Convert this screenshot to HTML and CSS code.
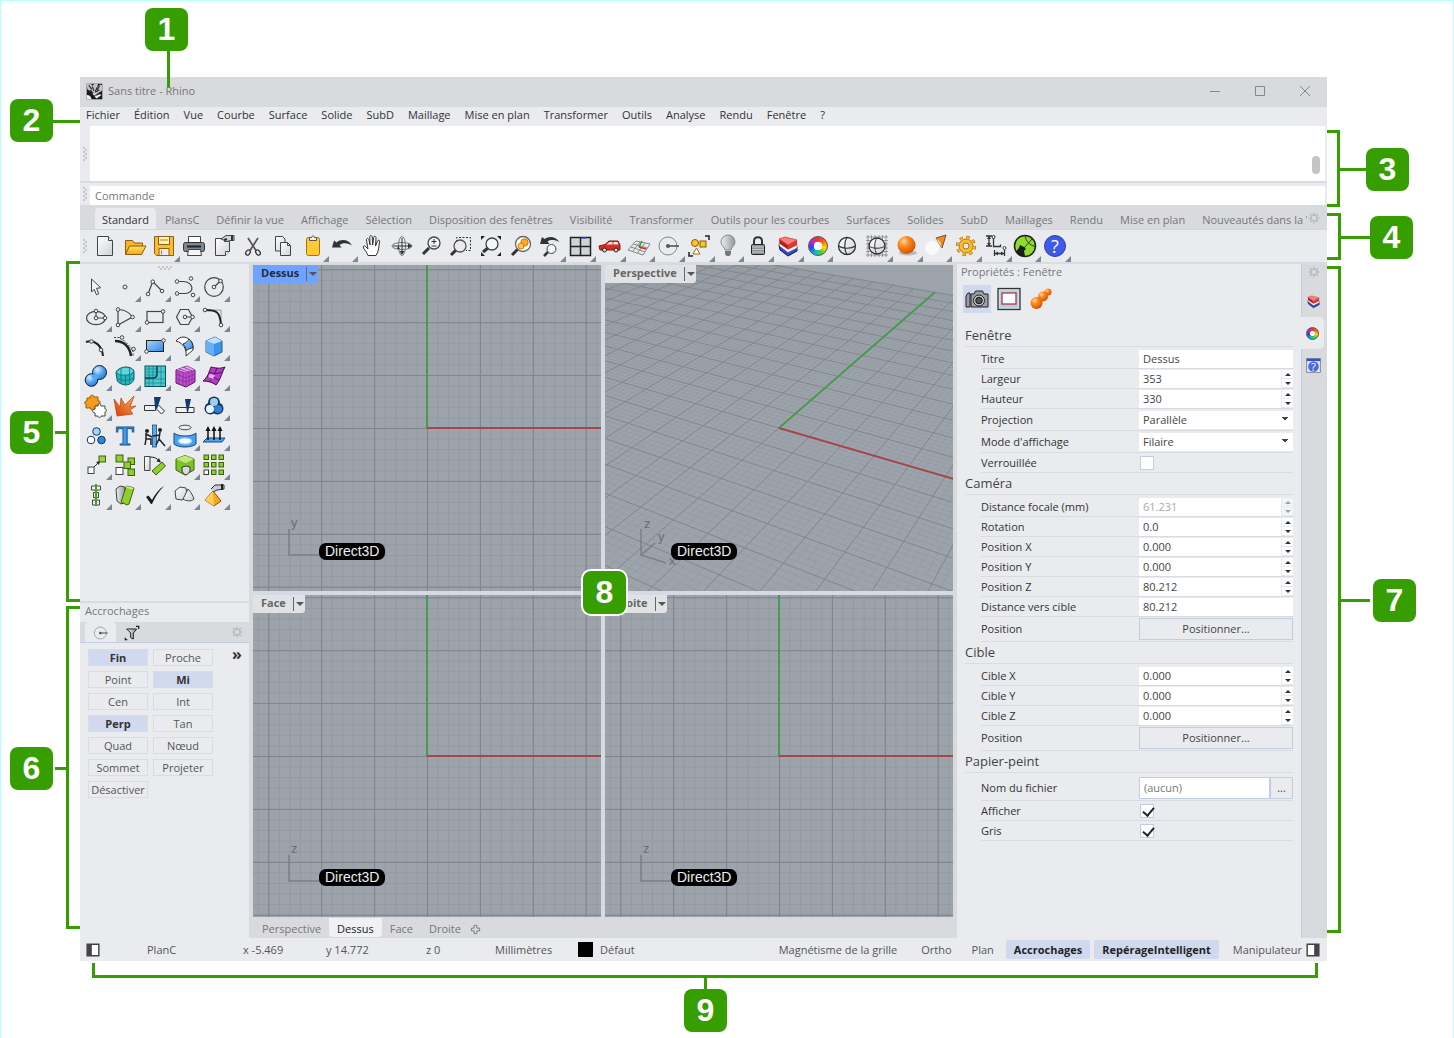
FILE: index.html
```
<!DOCTYPE html>
<html lang="fr">
<head>
	<meta charset="utf-8">
	<meta name="viewport" content="width=device-width, initial-scale=1">
	<title>Sans titre - Rhino</title>
	<link rel="stylesheet" href="styles.css">
</head>
<body>
<svg class="sprite" aria-hidden="true">
	<defs>
		<linearGradient id="gBlue" x1="0" y1="0" x2="1" y2="1"><stop offset="0" stop-color="#a8d4ff"/><stop offset="1" stop-color="#2f86e0"/></linearGradient>
		<radialGradient id="gBall" cx=".35" cy=".3" r=".8"><stop offset="0" stop-color="#d4ecff"/><stop offset=".5" stop-color="#55a5f5"/><stop offset="1" stop-color="#1f6fd0"/></radialGradient>
		<radialGradient id="gOrange" cx=".35" cy=".3" r=".8"><stop offset="0" stop-color="#ffd9a8"/><stop offset=".35" stop-color="#ff8a1c"/><stop offset="1" stop-color="#c84a00"/></radialGradient>
		<linearGradient id="gPaper" x1="0" y1="0" x2="1" y2="1"><stop offset="0" stop-color="#fff"/><stop offset="1" stop-color="#cfd2d6"/></linearGradient>
		<linearGradient id="gGrey" x1="0" y1="0" x2="1" y2="0"><stop offset="0" stop-color="#eef0f2"/><stop offset="1" stop-color="#8f969d"/></linearGradient>
		<linearGradient id="gFire" x1="0" y1="1" x2="1" y2="0"><stop offset="0" stop-color="#d63a08"/><stop offset="1" stop-color="#ffb45a"/></linearGradient>
		<linearGradient id="gGold" x1="0" y1="0" x2="0" y2="1"><stop offset="0" stop-color="#ffdf5e"/><stop offset="1" stop-color="#f5a81c"/></linearGradient>
		<pattern id="minor" width="10.58" height="10.58" patternUnits="userSpaceOnUse"><path d="M0 0H10.58M0 0V10.58" stroke="#8b9299" stroke-width="1" fill="none"/></pattern>
		<pattern id="major" width="52.9" height="52.9" patternUnits="userSpaceOnUse"><path d="M0 0H52.9M0 0V52.9" stroke="#7f8389" stroke-width="2" fill="none"/></pattern>
	</defs>

	<!-- main toolbar -->
	<symbol id="new" viewBox="0 0 24 24"><path d="M4.500 2.500h11l4 4v15h-15z" fill="url(#gPaper)" stroke="#444"/><path d="M15.500 2.500v4h4" fill="#fff" stroke="#444"/></symbol>
	<symbol id="open" viewBox="0 0 24 24"><path d="M2.500 20V6.500h7l2 2.500h8v4" fill="#f9b524" stroke="#8a5c10"/><path d="M2.500 20.500L6.500 12h16.500l-4.500 8.500z" fill="url(#gGold)" stroke="#8a5c10"/></symbol>
	<symbol id="save" viewBox="0 0 24 24"><path d="M2.500 2.500h19v19h-17l-2-2z" fill="#fbbd2b" stroke="#8a6112"/><path d="M6.500 3v7.500h11V3" fill="#fff2c0" stroke="#8a6112"/><path d="M7 21v-6.500h10V21" fill="#e9ebee" stroke="#8a6112"/><path d="M9.500 16.500v4M8 6h8" stroke="#b5841d"/></symbol>
	<symbol id="print" viewBox="0 0 24 24"><path d="M6.500 9V2.500h12V9" fill="#fff" stroke="#444"/><rect x="1.500" y="8.500" width="21" height="9" rx="2" fill="#7c8792" stroke="#333"/><path d="M5 12.500h14" stroke="#222" stroke-width="2"/><path d="M6.500 15.500h12l1 6h-14z" fill="#f4f5f6" stroke="#444"/></symbol>
	<symbol id="export" viewBox="0 0 24 24"><path d="M3.500 4.500h9v3h5v10l-4 4h-10z" fill="url(#gPaper)" stroke="#444"/><path d="M13.500 21.500v-4h4" fill="#fff" stroke="#444"/><path d="M9 5l5-3.500h8v5h-4l-3 1z" fill="#d0d3d7" stroke="#444"/><path d="M20 1.500v5M12 6l3-1" stroke="#333" stroke-width="2"/></symbol>
	<symbol id="cut" viewBox="0 0 24 24"><path d="M7 4l8 12.500M17 4L9 16.500" stroke="#555" stroke-width="1.700" fill="none"/><ellipse cx="7" cy="18.500" rx="2" ry="2.800" transform="rotate(35 7 18.500)" fill="none" stroke="#333" stroke-width="1.300"/><ellipse cx="17" cy="18.500" rx="2" ry="2.800" transform="rotate(-35 17 18.500)" fill="none" stroke="#333" stroke-width="1.300"/></symbol>
	<symbol id="copy" viewBox="0 0 24 24"><path d="M4.500 2.500h7l2.500 2.500v12h-9.500z" fill="url(#gPaper)" stroke="#444"/><path d="M9.500 8.500h7l3 3v10h-10z" fill="url(#gPaper)" stroke="#444"/><path d="M16.500 8.500v3h3" fill="none" stroke="#444"/></symbol>
	<symbol id="paste" viewBox="0 0 24 24"><rect x="5.500" y="3.500" width="13" height="18" rx="2" fill="#ffc933" stroke="#a8720f"/><path d="M8.500 6.500v-3h2c0-2 3-2 3 0h2v3z" fill="#eee" stroke="#555"/></symbol>
	<symbol id="undo" viewBox="0 0 24 24"><path d="M2 13.500L4 6.500l2.500 2c5-4 12-3 15.500 3-5-3-9-3-12.500-.5l2 2.500z" fill="#333"/></symbol>
	<symbol id="hand" viewBox="0 0 24 24"><path d="M8 21.500c-1-3-3-5-4.500-7.500-1-2 1-3 2.500-1L8 15 6.500 6c0-2 2-2 2.500 0l1 5-.2-8c0-2 2.200-2 2.400 0l.5 8 1-7.500c.2-2 2.400-1.500 2.300.3L15.500 12 17.500 7c.8-1.500 2.500-1 2.100.8-1 5.200-.6 9.200-3.600 13.700z" fill="#fff" stroke="#333"/></symbol>
	<symbol id="orbit" viewBox="0 0 24 24"><ellipse cx="12" cy="12" rx="10" ry="3.500" fill="none" stroke="#777"/><ellipse cx="12" cy="12" rx="3.500" ry="9.500" fill="none" stroke="#777"/><path d="M12 4v15M3 12h18" fill="none" stroke="#333"/><path d="M12 21l-2.500-4h5zM22 12l-4-2.500v5zM7 15l1-3 2 3z" fill="#333"/></symbol>
	<symbol id="zoom" viewBox="0 0 24 24"><path d="M3 20l6-6" stroke="#333" stroke-width="3"/><circle cx="14" cy="9" r="6" fill="#f3f5f7" stroke="#444" stroke-width="1.300"/><path d="M11.500 7.500h5M14 5v5M11.500 12h5" stroke="#333"/></symbol>
	<symbol id="zoomwin" viewBox="0 0 24 24"><path d="M7.500 8V3.500h14v13H17" fill="none" stroke="#333" stroke-dasharray="2 1.500"/><path d="M2 21l5-5" stroke="#333" stroke-width="3"/><circle cx="11" cy="12" r="6" fill="none" stroke="#555" stroke-width="1.300"/></symbol>
	<symbol id="zoomext" viewBox="0 0 24 24"><path d="M4 18l5-4" stroke="#333" stroke-width="3"/><circle cx="13" cy="10" r="6" fill="#f3f5f7" stroke="#444" stroke-width="1.300"/><path d="M2 6V2h4zM18 2h4v4zM22 18v4h-4zM2 18v4h4z" fill="#222"/></symbol>
	<symbol id="zoomsel" viewBox="0 0 24 24"><path d="M3 21l6-6" stroke="#333" stroke-width="3"/><circle cx="14" cy="10" r="7.500" fill="#fff" stroke="#666" stroke-width="1.300"/><circle cx="15.500" cy="8.500" r="3.700" fill="#ffa82e" stroke="#d27c00"/><circle cx="12" cy="12" r="3" fill="#ffc64a" stroke="#d27c00"/></symbol>
	<symbol id="undoview" viewBox="0 0 24 24"><path d="M2 10l2-7 2.500 2c5-3.500 11-2.500 15 3-5-2.500-9-2.500-12-.5l2 2.500z" fill="#333"/><path d="M6 22l4-4" stroke="#333" stroke-width="2.500"/><circle cx="13.500" cy="15" r="4.500" fill="#f3f5f7" stroke="#444"/></symbol>
	<symbol id="four" viewBox="0 0 24 24"><rect x="2.500" y="3.500" width="20" height="18" fill="#cfd3d8" stroke="#222" stroke-width="1.500"/><path d="M12.500 3v19M2 12.500h21" stroke="#222" stroke-width="1.500"/><path d="M14 4h4" stroke="#2c52d8" stroke-width="1.500"/></symbol>
	<symbol id="car" viewBox="0 0 24 24"><path d="M1 12l6-1.500L11 7h9l2 4v5H2z" fill="#e02a20" stroke="#8c1410"/><path d="M8.500 10.500L11.500 8h3v2.500zM15.500 8h4l.8 2.500h-4.800z" fill="#e8edf2"/><circle cx="6.500" cy="16" r="2" fill="#ddd" stroke="#222"/><circle cx="18" cy="16" r="2" fill="#ddd" stroke="#222"/></symbol>
	<symbol id="cplane" viewBox="0 0 24 24"><path d="M1 16L9 7l14 3-7 11zM4 13l14 5M6.500 10l14 4M5.500 17.500L13 8M10.500 19l7.500-10" fill="none" stroke="#888"/><path d="M12 13l3-6" stroke="#2aa52a" stroke-width="1.500"/><path d="M12 13l7 2" stroke="#d22" stroke-width="1.500"/></symbol>
	<symbol id="osnap" viewBox="0 0 24 24"><circle cx="11" cy="12" r="9" fill="none" stroke="#888"/><path d="M11 12h11" stroke="#333" stroke-width="1.300"/><circle cx="11" cy="12" r="2" fill="#555"/></symbol>
	<symbol id="select" viewBox="0 0 24 24"><circle cx="8" cy="9" r="3.500" fill="#ffc22e" stroke="#8a5a00"/><rect x="13" y="7" width="6" height="6" fill="#ffc22e" stroke="#8a5a00"/><path d="M9.500 14l3.500 6H6z" fill="#fff" stroke="#b06a00"/><path d="M18 2h4v4M6 22H2v-4" fill="none" stroke="#222" stroke-width="1.500"/></symbol>
	<symbol id="bulb" viewBox="0 0 24 24"><path d="M9 16c0-3-4-4-4-8a7 7 0 0 1 14 0c0 4-4 5-4 8z" fill="url(#gGrey)" stroke="#888"/><path d="M9 17h6v3l-1.500 2h-3L9 20z" fill="#777"/></symbol>
	<symbol id="lock" viewBox="0 0 24 24"><path d="M8 11V7c0-5 8-5 8 0v4" fill="none" stroke="#333" stroke-width="2"/><rect x="5.500" y="10.500" width="13" height="10" rx="1" fill="#8e9296" stroke="#222"/><path d="M6 13h12M6 15.500h12M6 18h12" stroke="#c4c7ca"/></symbol>
	<symbol id="layer" viewBox="0 0 24 24"><path d="M3 11l9 6 9-4v4l-9 5-8-6z" fill="#2d46d4" stroke="#223"/><path d="M3 9l9 6 9-4v3l-9 4.500L3.500 12z" fill="#fff" stroke="#667" stroke-width=".6"/><path d="M3 5l9 6v4.500L3.500 9.500z" fill="#b81d1d"/><path d="M12 11l9-5v5l-9 4.500z" fill="#e0342c"/><path d="M3 5l6-2 12 3-9 5z" fill="#ff7f78" stroke="#b22" stroke-width=".6"/></symbol>
	<symbol id="globe" viewBox="0 0 24 24"><circle cx="12" cy="12" r="8.500" fill="url(#gPaper)" stroke="#333" stroke-width="1.300"/><path d="M3.500 12c4 3 13 3 17 0M12 3.500c-3 4-3 13 0 17" fill="none" stroke="#333" stroke-width="1.200"/></symbol>
	<symbol id="globegrid" viewBox="0 0 24 24"><path d="M1 3h22M1 6.500h22M1 10h22M1 14h22M1 17.500h22M1 21h22M3 1v22M6.500 1v22M10 1v22M14 1v22M17.500 1v22M21 1v22" stroke="#777"  stroke-width=".7"/><circle cx="12" cy="12" r="8" fill="url(#gPaper)" stroke="#333" stroke-width="1.300"/><path d="M4 12c4 3 12 3 16 0M12 4c-3 4-3 12 0 16" fill="none" stroke="#333"/></symbol>
	<symbol id="ball" viewBox="0 0 24 24"><ellipse cx="13" cy="19" rx="9" ry="2.500" fill="#bbb"/><circle cx="11.500" cy="11" r="9" fill="url(#gOrange)"/></symbol>
	<symbol id="spot" viewBox="0 0 24 24"><circle cx="8" cy="14" r="7" fill="#fff" opacity=".7"/><path d="M12 4l10-3-4 13z" fill="#f08a2a" stroke="#8a4a10"/><path d="M12 4l6 10-2-6z" fill="#fff3c0"/></symbol>
	<symbol id="gear" viewBox="0 0 24 24"><circle cx="12" cy="12" r="8.200" fill="none" stroke="#b5780f" stroke-width="4" stroke-dasharray="3.200 3.240"/><circle cx="12" cy="12" r="7" fill="#fbbb30" stroke="#b5780f"/><circle cx="12" cy="12" r="8.200" fill="none" stroke="#fbbb30" stroke-width="2.500" stroke-dasharray="2 4.440" stroke-dashoffset="-.6"/><circle cx="12" cy="12" r="3" fill="#e9ebef" stroke="#b5780f"/></symbol>
	<symbol id="cog" viewBox="0 0 24 24"><circle cx="12" cy="12" r="6" fill="none" stroke="currentColor" stroke-width="3"/><path d="M12 1v5M12 18v5M1 12h5M18 12h5M4.200 4.200l3.500 3.500M16.300 16.300l3.500 3.500M4.200 19.800l3.500-3.500M16.300 7.700l3.500-3.500" stroke="currentColor" stroke-width="3"/></symbol>
	<symbol id="dim" viewBox="0 0 24 24"><path d="M2 2h6M2 12h6M5 2v10M9.500 3v9.500h7v-2M10.500 16v6M20.500 16v6M10.500 19.500h10" fill="none" stroke="#333" stroke-width="1.300"/><circle cx="9.500" cy="3" r="1.500" fill="#fff" stroke="#333"/><circle cx="20.500" cy="14" r="1.500" fill="#fff" stroke="#333"/><path d="M5 2l-2 3h4zM5 12l-2-3h4zM11 19.500l3-2v4zM20 19.500l-3-2v4z" fill="#333"/></symbol>
	<symbol id="gh" viewBox="0 0 24 24"><circle cx="12" cy="12" r="10.500" fill="#8fdc2c" stroke="#222" stroke-width="1.500"/><path d="M12 1.500c1 6 4 9 10 11M11 14l8-9" fill="none" stroke="#333"/><path d="M3 17c2-1 3-3 4-6l2 1 2 1 2 2-2 2 1 5c-4 1-7-1-9-5z" fill="#1c1c1c"/></symbol>

	<!-- tool palette -->
	<symbol id="arrow" viewBox="0 0 24 24"><path d="M7.500 4v13l2.700-2.700 2.300 5.500 2.300-1-2.300-5.500 4.200-.5z" fill="#f4f5f7" stroke="#444"/></symbol>
	<symbol id="point" viewBox="0 0 24 24"><circle cx="12" cy="12" r="2" class="n"/></symbol>
	<symbol id="pline" viewBox="0 0 24 24"><path d="M5 19L9.700 6.700 19 16" class="l"/><circle cx="5" cy="19" r="1.800" class="n"/><circle cx="9.700" cy="6.700" r="1.800" class="n"/><circle cx="19" cy="16" r="1.800" class="n"/></symbol>
	<symbol id="curve" viewBox="0 0 24 24"><path d="M4 6.500h6c11 0 12 12 2 12H4" class="l"/><circle cx="4" cy="6.500" r="1.800" class="n"/><circle cx="4" cy="18.500" r="1.800" class="n"/><circle cx="18" cy="3.500" r="1.800" class="n"/><circle cx="20" cy="20" r="1.800" class="n"/></symbol>
	<symbol id="circle" viewBox="0 0 24 24"><circle cx="12" cy="12" r="9.300" class="l"/><path d="M12 12l6.500-6" class="l"/><circle cx="12" cy="12" r="1.800" class="n"/><circle cx="18.500" cy="6" r="1.800" class="n"/></symbol>
	<symbol id="ellipse" viewBox="0 0 24 24"><ellipse cx="12" cy="13" rx="9.500" ry="6.700" class="l"/><path d="M12 6v7h9" class="l"/><circle cx="12" cy="6" r="1.800" class="n"/><circle cx="12" cy="13" r="1.800" class="n"/><circle cx="21" cy="13" r="1.800" class="n"/></symbol>
	<symbol id="arc" viewBox="0 0 24 24"><path d="M5 4.500V20l14.500-8C16 7 11 4.500 5 4.500" class="l"/><circle cx="5" cy="4.500" r="1.800" class="n"/><circle cx="5" cy="20" r="1.800" class="n"/><circle cx="19.500" cy="12" r="1.800" class="n"/></symbol>
	<symbol id="rect" viewBox="0 0 24 24"><rect x="4" y="6.500" width="16" height="11" class="l"/><circle cx="4" cy="17.500" r="1.800" class="n"/><circle cx="20" cy="6.500" r="1.800" class="n"/></symbol>
	<symbol id="hex" viewBox="0 0 24 24"><path d="M3.500 12l4-7.500h8l4 7.500-4 7.500h-8zM12 12h7" class="l"/><circle cx="12" cy="12" r="1.800" class="n"/><circle cx="19.500" cy="12" r="1.800" class="n"/></symbol>
	<symbol id="fillet" viewBox="0 0 24 24"><path d="M3 5h16v15" stroke="#999" fill="none"/><path d="M3 5c12 0 15 2 16 15" stroke="#222" stroke-width="2" fill="none"/><circle cx="3" cy="5" r="1.800" class="n"/><circle cx="19" cy="20" r="1.800" class="n"/></symbol>
	<symbol id="extend" viewBox="0 0 24 24"><path d="M2 8c9-3 16 4 17 14" stroke="#222" stroke-width="2" fill="none"/><circle cx="7.500" cy="7.500" r="1.800" class="n"/><circle cx="17" cy="16" r="1.800" class="n"/></symbol>
	<symbol id="blend" viewBox="0 0 24 24"><path d="M2 7c9 0 15 6 16 15" stroke="#222" stroke-width="2.500" fill="none"/><path d="M1 3.500h7l12 12V23" fill="none" stroke="#333" stroke-dasharray="2 1.500"/><circle cx="9" cy="3.500" r="1.800" class="n"/><circle cx="20.500" cy="15" r="1.800" class="n"/></symbol>
	<symbol id="plane" viewBox="0 0 24 24"><rect x="3.500" y="6.500" width="17" height="11" fill="url(#gBlue)" stroke="#222"/><circle cx="3.500" cy="17.500" r="1.800" class="n"/><circle cx="20.500" cy="6.500" r="1.800" class="n"/></symbol>
	<symbol id="loft" viewBox="0 0 24 24"><path d="M3 7c2-3 5-4 8-4 6 1 10 6 9 13l-7 6c1-7-3-13-10-15z" fill="#fff" stroke="#333"/><path d="M10 10c3-1 5-3 6-5 3 2 4 6 4 9-2 0-5 1-7 3 0-3-1-5-3-7z" fill="url(#gBlue)" stroke="#234"/></symbol>
	<symbol id="box" viewBox="0 0 24 24"><path d="M4 7l9-4 7 4v11l-8 4-8-4z" fill="#3c93ec" stroke="#245a92"/><path d="M4 7l9-4 7 4-8 3z" fill="#bfe0ff"/><path d="M4 7l8 3v12l-8-4z" fill="#68b0f5"/></symbol>
	<symbol id="union" viewBox="0 0 24 24"><circle cx="15.500" cy="8.500" r="7" fill="url(#gBall)" stroke="#123"/><circle cx="7.500" cy="16" r="6.300" fill="url(#gBall)" stroke="#123"/><path d="M9 10.500l4.500 4.500" stroke="#55a5f5" stroke-width="5"/></symbol>
	<symbol id="subd" viewBox="0 0 24 24"><path d="M3 9c0-3 5-6 10-6 4 0 8 2 8 5v7c-1 4-5 6-9 6-5-1-8-3-8-6z" fill="#27b5bd" stroke="#0b5b63"/><path d="M4 9c1-3 5-5 9-5 4 0 7 1 7 4-2 2-5 3-8 3s-6-1-8-2z" fill="#5fd6da"/><path d="M3.500 9c3 3 12 3 17.500-.5M12.500 11v10M4 14c3 3 12 3 17 0M8 4.500v15M16.500 4v15" stroke="#0b7580" stroke-width=".8" fill="none"/></symbol>
	<symbol id="mesh" viewBox="0 0 24 24"><rect x="2" y="2" width="20.500" height="20.500" fill="#4ec6cf" stroke="#0b4f58"/><path d="M2 8h20M2 15h20M2 19h20M6 2v20M10 2v20M18 2v20M2 5h12M2 11h12" stroke="#178a95" stroke-width=".8"/><path d="M2 14h8c3 0 4-1 4-4V2" stroke="#04434b" stroke-width="1.500" fill="none"/></symbol>
	<symbol id="meshbox" viewBox="0 0 24 24"><path d="M3 6l11-4 8 4v12l-9 5-10-4z" fill="#c050cf" stroke="#5a1466"/><path d="M3 6l11-4 8 4-9 3z" fill="#e6a4ee"/><path d="M3 6l10 3 9-3M13 9v14M3 10l10 4 9-4M3 15l10 3 9-4M6 7v13M10 8v14M16 8v13M19 7v12M6 5l10 3M10 3l9 4" stroke="#8a2c98" stroke-width=".8" fill="none"/></symbol>
	<symbol id="patch" viewBox="0 0 24 24"><path d="M1 17C6 13 7 8 9 3c4 1 9 2 14 0-3 5-4 12-9 18-4-3-8-4-13-4z" fill="#b23cc4" stroke="#3f0b49"/><path d="M5 13c4-1 8 1 12 3M7 8c5 2 9 2 13 0M7 18c4-5 6-9 8-14" stroke="#3f0b49" stroke-width=".8" fill="none"/><path d="M8 10l5 1-2 4-5-2z" fill="#e7a6ef"/></symbol>
	<symbol id="puzzle" viewBox="0 0 24 24"><path d="M3 4h3c-1-3 4-4 4-1h4v4c3-1 3 4 0 3v4h-4c1 3-4 3-3 0H2v-4c-2 0-2-3 1-3z" fill="#f49c1c" stroke="#a05c05"/><path d="M11 12h3c0-3 3-3 3 0h4v3c2 0 2 3 0 3v4h-4c0 2-3 2-3 0h-3v-3c-3 0-3-4 0-4z" fill="#fff" stroke="#444"/></symbol>
	<symbol id="explode" viewBox="0 0 24 24"><path d="M4 22L1 5l6 8 1-9 4 7 9-9-4 11 6-1-6 4 3 4z" fill="url(#gFire)" stroke="#b5400a" stroke-width=".7"/></symbol>
	<symbol id="trim" viewBox="0 0 24 24"><path d="M1.500 11.500h11v5h-11zM12.500 14l3-3 6 6-3 3z" fill="#f1f2f4" stroke="#333"/><path d="M11 3h7l-4 12-2-1z" fill="#123a73"/></symbol>
	<symbol id="split" viewBox="0 0 24 24"><path d="M3 13.500h18v5H3z" fill="#f1f2f4" stroke="#333"/><path d="M12 5h6l-3 13h-1z" fill="#123a73"/></symbol>
	<symbol id="bool" viewBox="0 0 24 24"><g fill="#16365e"><circle cx="12" cy="8.500" r="6"/><circle cx="8.500" cy="14.500" r="6"/><circle cx="15.500" cy="14.500" r="6"/></g><circle cx="12" cy="8" r="4" fill="#9bd0f7"/><circle cx="8" cy="15" r="4" fill="#e8f4ff"/><circle cx="16" cy="15" r="4" fill="#2b7fd8"/></symbol>
	<symbol id="group" viewBox="0 0 24 24"><circle cx="12.500" cy="7.500" r="3.800" fill="#a5d3f5" stroke="#16365e"/><circle cx="7" cy="16" r="3.800" fill="#fff" stroke="#16365e"/><circle cx="17.500" cy="16" r="3.800" fill="#2b86dd" stroke="#16365e"/></symbol>
	<symbol id="hist" viewBox="0 0 24 24"><rect x="9.500" y="1" width="4" height="22" fill="#57aef2" stroke="#1a4f84" stroke-width=".8"/><circle cx="4" cy="7" r="2" fill="#222"/><circle cx="17" cy="6" r="2" fill="#222"/><path d="M3 9v6l-1 6M3 10l6 3M17 8l-1 7 6 7M3 15h5v6M17 11l-7 1M16 15l-3 6" stroke="#222" stroke-width="1.500" fill="none"/></symbol>
	<symbol id="cage" viewBox="0 0 24 24"><ellipse cx="12" cy="3.500" rx="6" ry="2.300" fill="#eee" stroke="#444"/><path d="M1 9c4 4 18 4 22 0v11c-4 4-18 4-22 0z" fill="#4aa0ef" stroke="#164a80"/><ellipse cx="12" cy="17" rx="6.500" ry="3" fill="#fff" stroke="#9ad0ff" stroke-width="1.500"/></symbol>
	<symbol id="pull" viewBox="0 0 24 24"><path d="M5 14h18l-3 4H1z" fill="#4ea6f1" stroke="#174d83"/><path d="M6 16V5M12 16V5M18 16V5" stroke="#111" stroke-width="1.500"/><path d="M6 2L3.500 7h5zM12 2L9.500 7h5zM18 2l-2.500 5h5z" fill="#111"/></symbol>
	<symbol id="move" viewBox="0 0 24 24"><rect x="4" y="14" width="6" height="6.500" fill="#fff" stroke="#444"/><rect x="15" y="3" width="6.500" height="6" fill="#9bd13a" stroke="#3c6210"/><path d="M10 14l5-5" stroke="#333"/><path d="M16 8l-1 4-3-3z" fill="#333"/></symbol>
	<symbol id="copies" viewBox="0 0 24 24"><g fill="#8fce2d" stroke="#3c6210"><rect x="3" y="2" width="7" height="7"/><rect x="15" y="5" width="6.500" height="6.500"/><rect x="11" y="9" width="6.500" height="6.500"/><rect x="15" y="16" width="6.500" height="6.500"/></g><rect x="3" y="14.500" width="7" height="7" fill="#fff" stroke="#444"/></symbol>
	<symbol id="rotate" viewBox="0 0 24 24"><path d="M1.500 3.500h5.500v14H1.500z" fill="url(#gPaper)" stroke="#444"/><path d="M9 18l10-9 3.500 4L13 22z" fill="#8fce2d" stroke="#3c6210"/><path d="M7 4c4 0 7 1 9 4" stroke="#222" fill="none"/><path d="M18 9.500l-4.500-1L16 5z" fill="#222"/></symbol>
	<symbol id="orient" viewBox="0 0 24 24"><path d="M3 6l9-3.500L21 6v11l-9 5-9-5z" fill="#7cc424" stroke="#3c6210"/><path d="M3 6l9-3.500L21 6l-8 4z" fill="#bfe97c"/><path d="M9 14l4-1 4 1v4c-1 2-2 3-4 4-2-1-4-2-4-5z" fill="#d8dadd" stroke="#333"/></symbol>
	<symbol id="array" viewBox="0 0 24 24"><g fill="#8fce2d" stroke="#3c6210"><rect x="2" y="2" width="4.500" height="4.500"/><rect x="9.500" y="2" width="4.500" height="4.500"/><rect x="17" y="2" width="4.500" height="4.500"/><rect x="2" y="9.500" width="4.500" height="4.500"/><rect x="9.500" y="9.500" width="4.500" height="4.500"/><rect x="17" y="9.500" width="4.500" height="4.500"/><rect x="9.500" y="17" width="4.500" height="4.500"/><rect x="17" y="17" width="4.500" height="4.500"/></g><rect x="2" y="17" width="4.500" height="4.500" fill="#fff" stroke="#333"/></symbol>
	<symbol id="align" viewBox="0 0 24 24"><path d="M7.500 3h9v4h-9zM9.500 9.500h5v5h-5zM8.500 17h7v5h-7z" fill="#f1f2f4" stroke="#444"/><path d="M12 1v22" stroke="#46a321" stroke-width="2"/></symbol>
	<symbol id="slabs" viewBox="0 0 24 24"><path d="M3 6l4-3 5 1-1 16-3 1-4-3z" fill="url(#gGrey)" stroke="#444"/><path d="M14 3l7 2-5 16-2 1-6-3 5-15z" fill="#8fce2d" stroke="#3c6210"/><path d="M14 3l7 2-2 1.500-6-2z" fill="#c8ee88"/></symbol>
	<symbol id="check" viewBox="0 0 24 24"><path d="M3 14l2.500-1.500L9 17C12 11 16 6 21 3c-5 5-9 11-12 18H8z" fill="#1d1d1d"/></symbol>
	<symbol id="blobs" viewBox="0 0 24 24"><path d="M2 8l5-4 6 1 1 8-5 4-6-1z" fill="url(#gPaper)" stroke="#444"/><path d="M15 6c3 3 5 7 6 10-3 3-8 2-11 0z" fill="url(#gPaper)" stroke="#444"/></symbol>
	<symbol id="pyramid" viewBox="0 0 24 24"><path d="M9 6l4-4h9v4l-7 1-4 2" fill="#c9ccd0" stroke="#333"/><path d="M20 1v6" stroke="#222" stroke-width="2"/><path d="M11 8l8 10-7 5-9-6z" fill="#f6a81c" stroke="#8a5305"/><path d="M11 8l1 15-9-6z" fill="#ffcf5a"/></symbol>

	<!-- panels -->
	<symbol id="filter" viewBox="0 0 24 24"><path d="M4 6h15l-5 6v9l-4-2v-7z" fill="url(#gGrey)" stroke="#222" stroke-width="1.500"/><path d="M18 2h4v4M5 22H2v-3" fill="none" stroke="#222" stroke-width="2"/></symbol>
	<symbol id="camera" viewBox="0 0 24 24"><path d="M1 9l2-3h2v14H1zM6 7h3l1.500-3h7L19 7h4v13H6z" fill="#9a9fa5" stroke="#222"/><circle cx="14" cy="13.500" r="5.500" fill="#c9ccd0" stroke="#222"/><circle cx="14" cy="13.500" r="3.300" fill="#555" stroke="#111"/></symbol>
	<symbol id="frame" viewBox="0 0 24 24"><rect x="1" y="1.500" width="22" height="21" fill="#d8dadc" stroke="#333" stroke-width="1.300"/><rect x="3" y="3.500" width="18" height="17" fill="#9fd3f7"/><rect x="5" y="6" width="14" height="11" fill="#fff" stroke="#c9302c" stroke-width="1.300"/></symbol>
	<symbol id="balls" viewBox="0 0 24 24"><circle cx="19" cy="5" r="3.500" fill="url(#gOrange)"/><circle cx="14" cy="9.500" r="5" fill="url(#gOrange)"/><circle cx="7.500" cy="16" r="6" fill="url(#gOrange)"/></symbol>
	<symbol id="rhino" viewBox="0 0 24 24"><path d="M1 1h22v22H1z" fill="#1a1a1a"/><path d="M1 1h6l2 3 3-3h5l-1 5 4-4 3 1v7c-3 4-7 4-10 8l-3-1c0-4-4-6-8-8z" fill="#c4c4c4"/><path d="M4 3l4 6M9 5l2 6M16 6l-3 6M19 4l-3 6M6 10l4 4M13 13l6-3" stroke="#222" stroke-width="1.500" fill="none"/><path d="M1 17c4 0 6 2 7 6H1zM12 19l7-3 3 1-7 5z" fill="#eee"/></symbol>
	<symbol id="side" viewBox="0 0 24 24"><path d="M2 2h20v20H2z" fill="#fff" stroke="#444" stroke-width="2.500"/><path d="M2 2h8v20H2z" fill="#444"/></symbol>
</svg>

<main class="figure">
	<div class="window">
		<header class="titlebar">
			<svg class="logo"><use href="#rhino"/></svg>
			<span>Sans titre - Rhino</span>
			<div class="winbuttons">
				<button aria-label="Réduire"><svg viewBox="0 0 12 12"><path d="M1 6.500h10"/></svg></button>
				<button aria-label="Agrandir"><svg viewBox="0 0 12 12"><path d="M1.500 1.500h9v9h-9z"/></svg></button>
				<button aria-label="Fermer"><svg viewBox="0 0 12 12"><path d="M1 1l10 10M11 1L1 11"/></svg></button>
			</div>
			<div class="pointer down"><b class="badge">1</b></div>
		</header>

		<nav class="menubar">
			<button>Fichier</button><button>Édition</button><button>Vue</button><button>Courbe</button><button>Surface</button><button>Solide</button><button>SubD</button><button>Maillage</button><button>Mise en plan</button><button>Transformer</button><button>Outils</button><button>Analyse</button><button>Rendu</button><button>Fenêtre</button><button>?</button>
			<div class="pointer side"><b class="badge">2</b></div>
		</nav>

		<section class="command">
			<div class="history"><i class="grip"></i><div class="log"><i class="thumb"></i></div></div>
			<div class="prompt"><i class="grip"></i><input type="text" placeholder="Commande" aria-label="Commande"></div>
			<div class="bracket right"><b class="badge">3</b></div>
		</section>

		<section class="bars">
			<div class="tabbar">
				<div class="tabs">
					<button class="on">Standard</button><button>PlansC</button><button>Définir la vue</button><button>Affichage</button><button>Sélection</button><button>Disposition des fenêtres</button><button>Visibilité</button><button>Transformer</button><button>Outils pour les courbes</button><button>Surfaces</button><button>Solides</button><button>SubD</button><button>Maillages</button><button>Rendu</button><button>Mise en plan</button><button>Nouveautés dans la V8</button>
				</div>
				<svg class="cog"><use href="#cog"/></svg>
			</div>
			<div class="toolbar">
				<i class="grip"></i>
				<div class="tools">
					<button aria-label="Nouveau"><svg><use href="#new"/></svg></button>
					<button aria-label="Ouvrir"><svg><use href="#open"/></svg></button>
					<button class="more" aria-label="Enregistrer"><svg><use href="#save"/></svg></button>
					<button aria-label="Imprimer"><svg><use href="#print"/></svg></button>
					<button aria-label="Propriétés du document"><svg><use href="#export"/></svg></button>
					<button aria-label="Couper"><svg><use href="#cut"/></svg></button>
					<button aria-label="Copier"><svg><use href="#copy"/></svg></button>
					<button class="more" aria-label="Coller"><svg><use href="#paste"/></svg></button>
					<button class="more" aria-label="Annuler"><svg><use href="#undo"/></svg></button>
					<button aria-label="Panoramique"><svg><use href="#hand"/></svg></button>
					<button aria-label="Rotation de la vue"><svg><use href="#orbit"/></svg></button>
					<button aria-label="Zoom"><svg><use href="#zoom"/></svg></button>
					<button aria-label="Zoom fenêtre"><svg><use href="#zoomwin"/></svg></button>
					<button aria-label="Zoom étendu"><svg><use href="#zoomext"/></svg></button>
					<button aria-label="Zoom sélection"><svg><use href="#zoomsel"/></svg></button>
					<button class="more" aria-label="Annuler la vue"><svg><use href="#undoview"/></svg></button>
					<button class="more" aria-label="4 fenêtres"><svg><use href="#four"/></svg></button>
					<button class="more" aria-label="Vue droite"><svg><use href="#car"/></svg></button>
					<button class="more" aria-label="Plan de construction"><svg><use href="#cplane"/></svg></button>
					<button class="more" aria-label="Accrochages"><svg><use href="#osnap"/></svg></button>
					<button class="more" aria-label="Sélectionner"><svg><use href="#select"/></svg></button>
					<button class="more" aria-label="Cacher"><svg><use href="#bulb"/></svg></button>
					<button class="more" aria-label="Verrouiller"><svg><use href="#lock"/></svg></button>
					<button class="more" aria-label="Calques"><svg><use href="#layer"/></svg></button>
					<button class="more" aria-label="Propriétés"><i class="wheel"></i></button>
					<button aria-label="Ombrage"><svg><use href="#globe"/></svg></button>
					<button class="more" aria-label="Ombrer toutes les vues"><svg><use href="#globegrid"/></svg></button>
					<button class="more" aria-label="Rendu"><svg><use href="#ball"/></svg></button>
					<button class="more" aria-label="Lumière"><svg><use href="#spot"/></svg></button>
					<button class="more" aria-label="Options"><svg><use href="#gear"/></svg></button>
					<button class="more" aria-label="Cotations"><svg><use href="#dim"/></svg></button>
					<button class="more" aria-label="Grasshopper"><svg><use href="#gh"/></svg></button>
					<button class="more" aria-label="Aide"><svg viewBox="0 0 24 24"><circle cx="12" cy="12" r="10.500" fill="#3d5be6" stroke="#2a3fb5"/><text x="12" y="18.500" class="glyph">?</text></svg></button>
				</div>
			</div>
			<div class="bracket right far"><b class="badge">4</b></div>
		</section>

		<div class="workspace">
			<aside class="left">
				<section class="palette">
					<i class="grip flat"></i>
					<div class="toolgrid">
						<button aria-label="Sélection"><svg><use href="#arrow"/></svg></button>
						<button class="more" aria-label="Point"><svg><use href="#point"/></svg></button>
						<button class="more" aria-label="Polyligne"><svg><use href="#pline"/></svg></button>
						<button class="more" aria-label="Courbe"><svg><use href="#curve"/></svg></button>
						<button class="more" aria-label="Cercle"><svg><use href="#circle"/></svg></button>
						<button class="more" aria-label="Ellipse"><svg><use href="#ellipse"/></svg></button>
						<button class="more" aria-label="Arc"><svg><use href="#arc"/></svg></button>
						<button class="more" aria-label="Rectangle"><svg><use href="#rect"/></svg></button>
						<button class="more" aria-label="Polygone"><svg><use href="#hex"/></svg></button>
						<button class="more" aria-label="Congé"><svg><use href="#fillet"/></svg></button>
						<button aria-label="Prolonger"><svg><use href="#extend"/></svg></button>
						<button class="more" aria-label="Raccorder"><svg><use href="#blend"/></svg></button>
						<button class="more" aria-label="Plan"><svg><use href="#plane"/></svg></button>
						<button class="more" aria-label="Surface"><svg><use href="#loft"/></svg></button>
						<button class="more" aria-label="Boîte"><svg><use href="#box"/></svg></button>
						<button class="more" aria-label="Union booléenne"><svg><use href="#union"/></svg></button>
						<button class="more" aria-label="SubD"><svg><use href="#subd"/></svg></button>
						<button class="more" aria-label="Édition SubD"><svg><use href="#mesh"/></svg></button>
						<button class="more" aria-label="Maillage"><svg><use href="#meshbox"/></svg></button>
						<button class="more" aria-label="Édition de maillage"><svg><use href="#patch"/></svg></button>
						<button class="more" aria-label="Joindre"><svg><use href="#puzzle"/></svg></button>
						<button aria-label="Décomposer"><svg><use href="#explode"/></svg></button>
						<button aria-label="Limiter"><svg><use href="#trim"/></svg></button>
						<button aria-label="Diviser"><svg><use href="#split"/></svg></button>
						<button class="more" aria-label="Grouper"><svg><use href="#bool"/></svg></button>
						<button aria-label="Dégrouper"><svg><use href="#group"/></svg></button>
						<button aria-label="Texte"><svg viewBox="0 0 24 24"><text x="12" y="21" class="letter">T</text></svg></button>
						<button class="more" aria-label="Points"><svg><use href="#hist"/></svg></button>
						<button class="more" aria-label="Projeter"><svg><use href="#cage"/></svg></button>
						<button class="more" aria-label="Direction"><svg><use href="#pull"/></svg></button>
						<button class="more" aria-label="Déplacer"><svg><use href="#move"/></svg></button>
						<button aria-label="Copier des objets"><svg><use href="#copies"/></svg></button>
						<button aria-label="Rotation"><svg><use href="#rotate"/></svg></button>
						<button class="more" aria-label="Orienter"><svg><use href="#orient"/></svg></button>
						<button class="more" aria-label="Réseau"><svg><use href="#array"/></svg></button>
						<button class="more" aria-label="Aligner"><svg><use href="#align"/></svg></button>
						<button class="more" aria-label="Déformer"><svg><use href="#slabs"/></svg></button>
						<button class="more" aria-label="Vérifier"><svg><use href="#check"/></svg></button>
						<button class="more" aria-label="Blocs"><svg><use href="#blobs"/></svg></button>
						<button class="more" aria-label="Historique"><svg><use href="#pyramid"/></svg></button>
					</div>
					<div class="bracket left-side"><b class="badge">5</b></div>
				</section>
				<section class="osnaps">
					<h2>Accrochages</h2>
					<div class="paneltabs">
						<button class="on" aria-label="Accrochages"><svg><use href="#osnap"/></svg></button>
						<button aria-label="Filtre"><svg><use href="#filter"/></svg></button>
						<svg class="cog"><use href="#cog"/></svg>
					</div>
					<div class="snapbody">
						<div class="snaps">
							<button class="on">Fin</button><button>Proche</button>
							<button>Point</button><button class="on">Mi</button>
							<button>Cen</button><button>Int</button>
							<button class="on">Perp</button><button>Tan</button>
							<button>Quad</button><button>Nœud</button>
							<button>Sommet</button><button>Projeter</button>
							<button>Désactiver</button>
						</div>
						<button class="expand">»</button>
					</div>
					<div class="bracket left-side"><b class="badge">6</b></div>
				</section>
			</aside>

			<section class="center">
				<div class="views">
					<div class="view">
						<svg class="grid"><svg x="50%" y="50%" overflow="visible"><rect x="-1058" y="-1058" width="2116" height="2116" fill="url(#minor)"/><rect x="-1058" y="-1058" width="2116" height="2116" fill="url(#major)"/><path d="M0 0V-1000" class="yaxis"/><path d="M0 0H1000" class="xaxis"/></svg></svg>
						<button class="chip active">Dessus<i></i></button>
						<div class="hud"><svg viewBox="0 0 34 40"><path d="M2 11v26h32"/><text x="4" y="9">y</text></svg><span>Direct3D</span></div>
					</div>
					<div class="view">
						<svg class="grid"><svg id="persp" x="50%" y="50%" overflow="visible"></svg></svg>
						<button class="chip">Perspective<i></i></button>
						<div class="hud"><svg viewBox="0 0 34 40"><path d="M2 11v26l25 8M2 37l14-12"/><text x="5" y="10">z</text><text x="19" y="23">y</text><text x="30" y="47">x</text></svg><span>Direct3D</span></div>
					</div>
					<div class="view">
						<svg class="grid"><svg x="50%" y="50%" overflow="visible"><rect x="-1058" y="-1058" width="2116" height="2116" fill="url(#minor)"/><rect x="-1058" y="-1058" width="2116" height="2116" fill="url(#major)"/><path d="M0 0V-1000" class="yaxis"/><path d="M0 0H1000" class="xaxis"/></svg></svg>
						<button class="chip">Face<i></i></button>
						<div class="hud"><svg viewBox="0 0 34 40"><path d="M2 11v26h32"/><text x="4" y="9">z</text></svg><span>Direct3D</span></div>
					</div>
					<div class="view">
						<svg class="grid"><svg x="50%" y="50%" overflow="visible"><rect x="-1058" y="-1058" width="2116" height="2116" fill="url(#minor)"/><rect x="-1058" y="-1058" width="2116" height="2116" fill="url(#major)"/><path d="M0 0V-1000" class="yaxis"/><path d="M0 0H1000" class="xaxis"/></svg></svg>
						<button class="chip">Droite<i></i></button>
						<div class="hud"><svg viewBox="0 0 34 40"><path d="M2 11v26h32"/><text x="4" y="9">z</text></svg><span>Direct3D</span></div>
					</div>
					<b class="badge middle">8</b>
				</div>
				<div class="viewtabs">
					<button>Perspective</button><button class="on">Dessus</button><button>Face</button><button>Droite</button>
					<button class="add" aria-label="Ajouter une fenêtre"><svg viewBox="0 0 12 12"><path d="M4.500 1.500h3v3h3v3h-3v3h-3v-3h-3v-3h3z"/></svg></button>
				</div>
			</section>

			<aside class="props">
				<div class="propbody">
					<h2>Propriétés : Fenêtre</h2>
					<div class="propicons">
						<button class="on" aria-label="Caméra"><svg><use href="#camera"/></svg></button>
						<button aria-label="Cadre"><svg><use href="#frame"/></svg></button>
						<button aria-label="Matériau"><svg><use href="#balls"/></svg></button>
					</div>

					<h3>Fenêtre</h3>
					<div class="rows">
						<div class="row"><label for="titre">Titre</label><input id="titre" type="text" value="Dessus"></div>
						<div class="row"><label for="largeur">Largeur</label><input id="largeur" type="number" value="353"><span class="spin"><button aria-label="Plus"></button><button aria-label="Moins"></button></span></div>
						<div class="row"><label for="hauteur">Hauteur</label><input id="hauteur" type="number" value="330"><span class="spin"><button aria-label="Plus"></button><button aria-label="Moins"></button></span></div>
						<div class="row tall"><label for="projection">Projection</label><select id="projection"><option>Parallèle</option></select></div>
						<div class="row tall"><label for="mode">Mode d'affichage</label><select id="mode"><option>Filaire</option></select></div>
						<div class="row"><label for="verrou">Verrouillée</label><input id="verrou" type="checkbox"></div>
					</div>

					<h3>Caméra</h3>
					<div class="rows">
						<div class="row"><label for="focale">Distance focale (mm)</label><input id="focale" type="number" value="61.231" disabled><span class="spin off"><button aria-label="Plus" disabled></button><button aria-label="Moins" disabled></button></span></div>
						<div class="row"><label for="rotation">Rotation</label><input id="rotation" type="number" value="0.0"><span class="spin"><button aria-label="Plus"></button><button aria-label="Moins"></button></span></div>
						<div class="row"><label for="posx">Position X</label><input id="posx" type="number" value="0.000"><span class="spin"><button aria-label="Plus"></button><button aria-label="Moins"></button></span></div>
						<div class="row"><label for="posy">Position Y</label><input id="posy" type="number" value="0.000"><span class="spin"><button aria-label="Plus"></button><button aria-label="Moins"></button></span></div>
						<div class="row"><label for="posz">Position Z</label><input id="posz" type="number" value="80.212"><span class="spin"><button aria-label="Plus"></button><button aria-label="Moins"></button></span></div>
						<div class="row"><label for="distance">Distance vers cible</label><input id="distance" type="text" value="80.212"></div>
						<div class="row button"><label for="poscam">Position</label><button id="poscam">Positionner...</button></div>
					</div>

					<h3>Cible</h3>
					<div class="rows">
						<div class="row"><label for="ciblex">Cible X</label><input id="ciblex" type="number" value="0.000"><span class="spin"><button aria-label="Plus"></button><button aria-label="Moins"></button></span></div>
						<div class="row"><label for="cibley">Cible Y</label><input id="cibley" type="number" value="0.000"><span class="spin"><button aria-label="Plus"></button><button aria-label="Moins"></button></span></div>
						<div class="row"><label for="ciblez">Cible Z</label><input id="ciblez" type="number" value="0.000"><span class="spin"><button aria-label="Plus"></button><button aria-label="Moins"></button></span></div>
						<div class="row button"><label for="poscible">Position</label><button id="poscible">Positionner...</button></div>
					</div>

					<h3>Papier-peint</h3>
					<div class="rows">
						<div class="row button file"><label for="fichier">Nom du fichier</label><input id="fichier" type="text" placeholder="(aucun)"><button class="browse">...</button></div>
						<div class="row"><label for="afficher">Afficher</label><input id="afficher" type="checkbox" checked></div>
						<div class="row"><label for="gris">Gris</label><input id="gris" type="checkbox" checked></div>
					</div>
				</div>
				<nav class="strip">
					<svg class="cog"><use href="#cog"/></svg>
					<button aria-label="Calques"><svg><use href="#layer"/></svg></button>
					<button class="on" aria-label="Propriétés"><i class="wheel"></i></button>
					<button aria-label="Aide"><svg viewBox="0 0 24 24"><path d="M1 1h22v22H1z" fill="#e8ebf5" stroke="#555"/><path d="M1 1h22v4H1z" fill="#3455cf"/><circle cx="12" cy="13.500" r="8.500" fill="#4a6be0"/><text x="12" y="20" class="glyph">?</text></svg></button>
				</nav>
				<div class="bracket right"><b class="badge">7</b></div>
			</aside>
		</div>

		<footer class="status">
			<button class="toggle" aria-label="Barre de gauche"><svg><use href="#side"/></svg></button>
			<span class="cplane">PlanC</span>
			<span class="coord">x -5.469</span>
			<span class="coord y">y 14.772</span>
			<span class="coord z">z 0</span>
			<span class="units">Millimètres</span>
			<span class="layer"><i></i>Défaut</span>
			<div class="modes">
				<button>Magnétisme de la grille</button><button>Ortho</button><button>Plan</button><button class="on">Accrochages</button><button class="on">RepérageIntelligent</button><button>Manipulateur</button>
			</div>
			<button class="toggle flip" aria-label="Barre de droite"><svg><use href="#side"/></svg></button>
			<div class="bracket bottom"><b class="badge">9</b></div>
		</footer>
	</div>
</main>
<script src="viewport.js"></script>
</body>
</html>
```
FILE: styles.css
```
:root{
	--panel: #e9ebef;
	--bar: #d9dadd;
	--line: #d8dbe2;
	--hot: #d0d9ee;
	--edge: #c3cde0;
	--green: #369e00;
}

*{
	box-sizing: border-box;
}

body{
	margin: 0;
	font-family: "Open Sans", "Noto Sans", sans-serif;
	font-size: 11px;
	line-height: 16px;
	color: #444;
	background: #fff;
}

button, input, select{
	font: inherit;
	color: inherit;
	background: none;
	border: 0;
	margin: 0;
	padding: 0;
}

h2, h3{
	margin: 0;
	font-weight: normal;
}

h2{
	font-size: 11px;
	color: #777;
}

.sprite{
	position: absolute;
	width: 0;
	height: 0;
}

.figure{
	display: flex;
	min-height: 100vh;
	padding: 76px 126px 77px 79px;
	border: 1px solid #b8ffff;
	border-bottom: 0;
}

.window{
	flex: 1;
	min-width: 0;
	display: flex;
	flex-direction: column;
	background: var(--panel);
}

/* numbered callouts */
.badge{
	position: absolute;
	z-index: 5;
	width: 43px;
	height: 43px;
	border-radius: 8px;
	background: var(--green);
	color: #fff;
	font: bold 32px/43px "Liberation Sans", Arial, sans-serif;
	text-align: center;
}

.pointer{
	position: absolute;
	background: var(--green);
}

.pointer.down{
	left: 87px;
	bottom: 20px;
	width: 3px;
	height: 40px;
}

.pointer.down .badge{
	bottom: 36px;
	left: -22px;
}

.pointer.side{
	right: 100%;
	top: 13px;
	width: 27px;
	height: 3px;
}

.pointer.side .badge{
	right: 27px;
	top: -21px;
}

.bracket{
	position: absolute;
	z-index: 4;
	border: 3px solid var(--green);
}

.bracket::after{
	content: "";
	position: absolute;
	background: var(--green);
}

.bracket.right{
	left: 100%;
	top: 2px;
	bottom: 5px;
	width: 14px;
	border-left: 0;
}

.bracket.right::after{
	left: 100%;
	top: 50%;
	width: 32px;
	height: 3px;
	margin-top: -1px;
}

.bracket.right .badge{
	left: 39px;
	top: 50%;
	margin-top: -21px;
}

.command .bracket.right{
	top: 4px;
	bottom: -2px;
	width: 13px;
}

.bars .bracket.right{
	top: 6px;
	bottom: 2px;
}

.bracket.right.far .badge{
	left: 43px;
}

.props .bracket.right .badge{
	left: 46px;
}

.bracket.left-side{
	right: 100%;
	top: -3px;
	bottom: -1px;
	width: 14px;
	border-right: 0;
}

.osnaps .bracket.left-side{
	top: 3px;
	bottom: 9px;
}

.bracket.left-side::after{
	right: 100%;
	top: 50%;
	width: 14px;
	height: 3px;
	margin-top: -1px;
}

.bracket.left-side .badge{
	right: 27px;
	top: 50%;
	margin-top: -21px;
}

.bracket.bottom{
	top: 25px;
	left: 12px;
	right: 9px;
	height: 15px;
	border-top: 0;
}

.bracket.bottom::after{
	left: 50%;
	top: 100%;
	width: 3px;
	height: 14px;
	margin-left: -1px;
}

.bracket.bottom .badge{
	left: 50%;
	top: 26px;
	margin-left: -21px;
}

/* title and menu */
.titlebar{
	position: relative;
	display: flex;
	align-items: center;
	gap: 5px;
	height: 30px;
	padding: 0 0 2px 6px;
	background: var(--bar);
	color: #777;
}

.logo{
	width: 17px;
	height: 17px;
}

.winbuttons{
	margin-left: auto;
	display: flex;
}

.winbuttons button{
	display: flex;
	align-items: center;
	justify-content: center;
	width: 45px;
	height: 28px;
}

.winbuttons svg{
	width: 12px;
	height: 12px;
	fill: none;
	stroke: #888;
}

.menubar{
	position: relative;
	display: flex;
	gap: 14px;
	height: 19px;
	padding: 0 6px;
	color: #333;
}

.menubar button{
	height: 16px;
}

/* command area */
.command{
	position: relative;
	border-bottom: 2px solid var(--line);
}

.grip{
	flex: none;
	width: 4px;
	height: 14px;
	margin: auto 3px;
	background: radial-gradient(circle at 1px 1px, #c3c6cb 1px, transparent 1px) 0 0 / 4px 4px, radial-gradient(circle at 1px 1px, #c3c6cb 1px, transparent 1px) 2px 2px / 4px 4px;
}

.grip.flat{
	display: block;
	width: 14px;
	height: 4px;
	margin: 0 auto;
}

.history, .prompt{
	display: flex;
	padding-right: 2px;
}

.history{
	border-bottom: 2px solid var(--line);
}

.log{
	position: relative;
	flex: 1;
	height: 55px;
	background: #fff;
}

.thumb{
	position: absolute;
	right: 5px;
	bottom: 7px;
	width: 8px;
	height: 18px;
	border-radius: 4px;
	background: #c4c4c4;
}

.prompt input{
	flex: 1;
	min-width: 0;
	height: 19px;
	margin: 3px 0 0;
	padding: 0 5px;
	background: #fff;
	outline: 0;
}

.prompt input::placeholder{
	color: #777;
}

/* toolbar tabs */
.bars{
	position: relative;
	border-bottom: 2px solid var(--line);
}

.tabbar{
	display: flex;
	align-items: center;
	height: 23px;
	padding-left: 15px;
	background: var(--bar);
	border-bottom: 1px solid #d0d6e2;
}

.tabs{
	flex: 1;
	min-width: 0;
	display: flex;
	gap: 1px;
	align-self: end;
	overflow: hidden;
	color: #777;
}

.tabs button{
	flex: none;
	height: 21px;
	padding: 2px 8px 0;
	white-space: nowrap;
}

.tabs .on{
	padding: 2px 7px 0;
	background: var(--panel);
	border-radius: 4px 4px 0 0;
	color: #333;
}

.cog{
	width: 12px;
	height: 12px;
	color: #bbbdc1;
}

.tabbar .cog{
	margin: 0 7px 0 1px;
}

.toolbar{
	display: flex;
	height: 32px;
}

.tools{
	flex: 0 1 980px;
	display: grid;
	grid-template-columns: repeat(33, 1fr);
}

.tools button, .toolgrid button{
	position: relative;
	display: flex;
	align-items: center;
	justify-content: center;
}

.tools svg, .toolgrid svg{
	width: 24px;
	height: 24px;
	flex: none;
}

.more::after{
	content: "";
	position: absolute;
	right: -1px;
	bottom: 0;
	border: 3px solid #7a8794;
	border-top-color: transparent;
	border-left-color: transparent;
}

.wheel{
	display: block;
	width: 20px;
	height: 20px;
	border: 1px solid #555;
	border-radius: 50%;
	background: radial-gradient(circle, #fff 32%, transparent 36%), conic-gradient(#e33, #f60, #fd0, #4c3, #0bd, #24e, #c2c, #e33);
}

.glyph{
	font: 18px "Open Sans", sans-serif;
	fill: #fff;
	text-anchor: middle;
}

.letter{
	font: bold 27px "Liberation Serif", serif;
	fill: #3f9bea;
	stroke: #1b5c9e;
	text-anchor: middle;
}

.n{
	fill: #eef0f2;
	stroke: #444;
}

.l{
	fill: none;
	stroke: #444;
	stroke-width: 1.2px;
}

/* workspace */
.workspace{
	flex: 1;
	display: flex;
	background: var(--bar);
}

.left{
	flex: none;
	display: flex;
	flex-direction: column;
	width: 169px;
	background: var(--panel);
}

.palette, .osnaps{
	position: relative;
	flex: 1;
}

.palette{
	padding-top: 2px;
	border-bottom: 2px solid var(--line);
}

.toolgrid{
	display: grid;
	grid-template: repeat(8, 1fr) / repeat(5, 1fr);
	width: 149px;
	height: 238px;
	margin-top: 2px;
	padding-left: 1px;
}

.osnaps h2{
	padding: 0 5px 3px;
}

.paneltabs{
	display: flex;
	align-items: center;
	height: 21px;
	padding-left: 5px;
	background: var(--bar);
	border-bottom: 1px solid var(--edge);
}

.paneltabs button{
	width: 31px;
	height: 20px;
	border-radius: 4px 4px 0 0;
}

.paneltabs .on{
	background: var(--panel);
}

.paneltabs button svg{
	width: 16px;
	height: 16px;
	vertical-align: middle;
}

.paneltabs .cog{
	margin: 0 6px 0 auto;
}

.snapbody{
	display: flex;
	align-items: start;
	gap: 19px;
	padding: 6px 8px;
}

.snaps{
	display: grid;
	grid-template-columns: 60px 60px;
	gap: 5px;
}

.snaps button{
	height: 17px;
	border: 1px solid #d9dce2;
	line-height: 15px;
	color: #555;
}

.snaps .on{
	background: var(--hot);
	font-weight: bold;
	color: #333;
}

.expand{
	font-size: 16px;
	font-weight: bold;
	line-height: 10px;
	color: #333;
}

/* viewports */
.center{
	flex: 1;
	min-width: 0;
	display: flex;
	flex-direction: column;
	padding: 1px 4px 0;
}

.views{
	position: relative;
	flex: 1;
	display: grid;
	grid-template: 163fr 161fr / 1fr 1fr;
	gap: 4px;
	background: #d5dae5;
}

.view{
	position: relative;
	overflow: hidden;
	background: #9ca3ab;
}

.grid{
	position: absolute;
	inset: 0;
	width: 100%;
	height: 100%;
}

.xaxis, .yaxis{
	stroke: #a4474a;
	stroke-width: 2px;
}

.yaxis{
	stroke: #469c4c;
}

.persp-minor, .persp-major{
	fill: none;
	stroke: #8b9299;
	stroke-opacity: .35;
}

.persp-major{
	stroke: #7f8389;
	stroke-opacity: .9;
}

.chip{
	position: absolute;
	left: 0;
	top: 0;
	display: flex;
	height: 18px;
	padding-left: 8px;
	border-radius: 0 0 3px 0;
	background: #e0e2e6;
	color: #666;
	font-weight: bold;
}

.chip i{
	width: 12px;
	height: 14px;
	margin: 2px 0 0 7px;
	border-left: 1px solid #666;
}

.chip i::after{
	content: "";
	display: block;
	margin: 5px 0 0 2px;
	width: 0;
	border: solid transparent;
	border-width: 4px 4px 0;
	border-top-color: #555;
}

.chip.active{
	background: #6ea3ff;
	color: #222c44;
}

.hud{
	position: absolute;
	left: 34px;
	bottom: 31px;
	display: flex;
	align-items: end;
}

.hud svg{
	width: 34px;
	height: 40px;
	margin: 0 -2px 2px 0;
	overflow: visible;
	fill: none;
	stroke: #7b7f85;
	stroke-width: 1.5px;
}

.hud text{
	font: 13px "Liberation Sans", sans-serif;
	fill: #6b6f75;
	stroke: none;
}

.hud span{
	z-index: 1;
	padding: 0 6px;
	border-radius: 7px;
	background: #000;
	color: #eee;
	font: 14px/17px "Liberation Sans", Arial, sans-serif;
}

.badge.middle{
	left: 50%;
	top: 50%;
	width: 47px;
	height: 47px;
	margin: -22px 0 0 -22px;
	border: 2px solid #fff;
	border-radius: 10px;
}

.viewtabs{
	display: flex;
	height: 21px;
	padding: 1px 0 1px 1px;
	color: #777;
}

.viewtabs button{
	padding: 2px 8px 0;
	border-radius: 0 0 4px 4px;
}

.viewtabs .on{
	background: #eff1f5;
	color: #222;
}

.viewtabs .add{
	padding-left: 1px;
}

.viewtabs svg{
	width: 11px;
	height: 11px;
	fill: none;
	stroke: #777;
	vertical-align: middle;
}

/* properties */
.props{
	position: relative;
	flex: none;
	display: flex;
	width: 370px;
	padding-right: 2px;
}

.propbody{
	flex: 1;
	padding: 0 8px;
	background: var(--panel);
	border-right: 1px solid var(--edge);
}

.propbody h2{
	margin-left: -4px;
}

.propicons{
	display: flex;
	gap: 4px;
	padding-top: 5px;
	margin-left: -2px;
}

.propicons button{
	width: 28px;
	height: 28px;
}

.propicons .on{
	background: var(--hot);
}

.propicons svg{
	width: 24px;
	height: 24px;
	vertical-align: middle;
}

.propbody h3{
	height: 22px;
	border-bottom: 1px solid var(--line);
	font-size: 13px;
	line-height: 20px;
}

.propicons + h3{
	margin-top: 12px;
}

.rows{
	padding: 2px 0 0 16px;
}

.row{
	display: flex;
	align-items: center;
	height: 20px;
	border-bottom: 1px solid var(--line);
}

.row.tall{
	height: 22px;
}

.row.button{
	height: 25px;
}

.row label{
	flex: 1;
	color: #333;
}

.row input, .row select{
	width: 154px;
	height: 18px;
	padding: 0 4px;
	background: #fff;
	border-radius: 0;
	outline: 0;
}

.row input[type="number"]{
	width: 142px;
	appearance: textfield;
}

.row input::-webkit-inner-spin-button{
	display: none;
}

.row input:disabled{
	color: #aaa;
}

.row select{
	appearance: none;
	background: linear-gradient(45deg, transparent 50%, #444 50%) 142px 6px / 4px 4px no-repeat, linear-gradient(-45deg, transparent 50%, #444 50%) 146px 6px / 4px 4px no-repeat, #fff;
}

.row input[type="checkbox"]{
	appearance: none;
	width: 14px;
	height: 14px;
	margin: 0 139px 0 1px;
	padding: 0;
	border: 1px solid var(--edge);
}

.row input[type="checkbox"]:checked::after{
	content: "";
	display: block;
	width: 5px;
	height: 9px;
	margin: 0 0 0 4px;
	border: solid #222;
	border-width: 0 2px 2px 0;
	transform: rotate(40deg);
}

.spin{
	display: flex;
	flex-direction: column;
	gap: 1px;
	width: 11px;
	margin-left: 1px;
}

.spin button{
	height: 8px;
	background: #fff;
	display: flex;
	align-items: center;
	justify-content: center;
}

.spin button::after{
	content: "";
	border: solid transparent;
	border-width: 0 3px 3px;
	border-bottom-color: #333;
}

.spin button + button::after{
	border-width: 3px 3px 0;
	border-top-color: #333;
}

.spin.off{
	opacity: .4;
}

.row.button button{
	width: 154px;
	height: 22px;
	border: 1px solid var(--edge);
}

.row.file{
	height: 26px;
}

.row.file input{
	width: 131px;
	height: 22px;
	border: 1px solid var(--edge);
}

.row.file .browse{
	width: 23px;
}

.row.file input::placeholder{
	color: #777;
}

.strip{
	width: 23px;
	display: flex;
	flex-direction: column;
	align-items: center;
	padding-top: 2px;
}

.strip button{
	width: 23px;
	height: 32px;
}

.strip .cog{
	margin-bottom: 7px;
}

.strip button svg{
	width: 15px;
	height: 15px;
	vertical-align: middle;
}

.strip .wheel{
	width: 13px;
	height: 13px;
	margin: 0 auto;
}

.strip .on{
	margin-left: -2px;
	background: var(--panel);
	border-radius: 0 5px 5px 0;
}

/* status bar */
.status{
	position: relative;
	display: flex;
	align-items: center;
	height: 23px;
	padding: 0 7px 0 6px;
	color: #555;
}

.toggle{
	width: 14px;
	height: 14px;
}

.toggle svg{
	display: block;
	width: 14px;
	height: 14px;
}

.flip{
	transform: scaleX(-1);
}

.cplane{
	width: 96px;
	margin-left: 47px;
}

.coord{
	width: 83px;
}

.coord.y{
	width: 100px;
}

.coord.z{
	width: 69px;
}

.units{
	width: 83px;
}

.layer{
	display: flex;
	align-items: center;
	gap: 7px;
}

.layer i{
	width: 15px;
	height: 15px;
	background: #000;
}

.modes{
	display: flex;
	gap: 4px;
	margin-left: auto;
}

.modes button{
	height: 19px;
	padding: 0 8px;
	border-radius: 2px;
}

.modes button:first-child{
	margin-right: 4px;
}

.modes button:last-child{
	padding: 0 4px 0 10px;
}

.modes .on{
	background: var(--hot);
	color: #222;
	font-weight: bold;
}
```
FILE: viewport.js
```
// perspective construction grid: 14 major squares each way from the origin
var VX = [-1334, -389], VY = [447, -389];
var A = -0.02218, B = 0.03825;

function project(x, y) {
	var w = 1 + A * x + B * y;
	return ((A * x * VX[0] + B * y * VY[0]) / w).toFixed(1) + ' ' + ((A * x * VX[1] + B * y * VY[1]) / w).toFixed(1);
}

function line(x1, y1, x2, y2) {
	return 'M' + project(x1, y1) + 'L' + project(x2, y2);
}

function addPath(d, name) {
	var p = document.createElementNS('http://www.w3.org/2000/svg', 'path');
	p.setAttribute('d', d);
	p.setAttribute('class', name);
	document.getElementById('persp').appendChild(p);
}

var minor = '', major = '';
for (var i = -70; i <= 70; i++) {
	var d = line(i / 5, -14, i / 5, 14) + line(-14, i / 5, 14, i / 5);
	if (i % 5) minor += d;
	else major += d;
}
addPath(minor, 'persp-minor');
addPath(major, 'persp-major');
addPath(line(0, 0, 0, 14), 'yaxis');
addPath(line(0, 0, 14, 0), 'xaxis');
```
